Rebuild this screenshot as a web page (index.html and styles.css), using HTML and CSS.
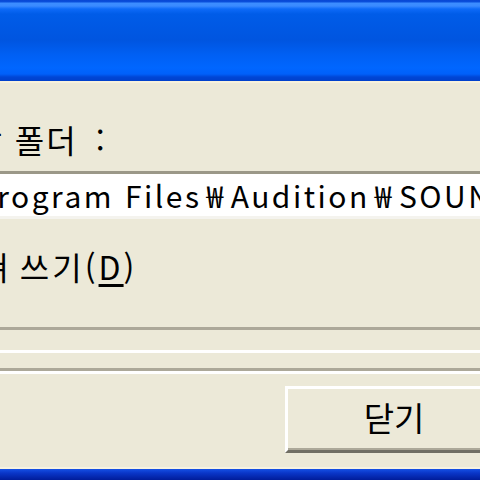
FILE: index.html
```html
<!DOCTYPE html>
<html lang='ko'>
<head>
  <meta charset='UTF-8'>
  <title>저장</title>
  <link rel="stylesheet" href="styles.css">
</head>
<body>

<div class='window'>
  <div class='titlebar'></div>

  <div class='client'>
    <div class='group'>
      <div class='field-label'>저장 폴더<span class='colon'>:</span></div>
      <div class='path-field'>C:<span class='sep'>₩</span>Program Files<span class='sep'>₩</span>Audition<span class='sep'>₩</span>SOUNDS</div>
      <label class='check-row'>
        <span class='check-box'></span>
        <span>겹쳐 쓰기(<u>D</u>)</span>
      </label>
    </div>

    <div class='status-bar'></div>

    <div class='actions'>
      <button class='xp-btn'>닫기</button>
    </div>
  </div>

  <div class='frame-bottom'></div>
</div>

</body>
</html>
```

FILE: styles.css
```css
* {
  margin: 0;
  padding: 0;
  box-sizing: border-box;
}

body {
  font-family: 'Noto Sans CJK KR', 'Noto Sans', sans-serif;
  background-color: #ECE9D8; /* XP dialog face */
  color: #000;
  overflow: hidden;
}

.window {
  width: 480px;
  height: 480px;
  display: flex;
  flex-direction: column;
  overflow: hidden;
}

/* Luna title bar */
.titlebar {
  height: 83px;
  flex-shrink: 0;
  background: linear-gradient(to bottom,
    #0846d4 0px, #0a4fdc 2px, #3d8eff 3px, #3a8aff 6px,
    #0d6af8 9px, #005ce8 14px, #0055e0 40px, #0060f4 55px,
    #0066ff 68px, #0060fa 74px, #0046d6 77px, #003cc6 83px);
  border-bottom: 2px solid #f7f1dc;
}

/* the dialog is wider than the crop, so it starts left of the view */
.client {
  flex: 1;
  width: 660px;
  margin-left: -140px;
  padding: 36px 20px 0 0;
  display: flex;
  flex-direction: column;
}

.group {
  padding-bottom: 41px;
  border-bottom: 3px solid #aca899;
}

.field-label {
  font-size: 32px;
  line-height: 40px;
  letter-spacing: 2px;
  padding-left: 81px;
}

.colon {
  margin-left: 18px;
}

.path-field {
  margin: 12px 0 0 46px;
  height: 48px;
  padding-left: 8px;
  background-color: #fff;
  border-top: 3px solid #9b9888;
  border-bottom: 3px solid #f4f3ee;
  font-size: 30px;
  line-height: 42px;
  letter-spacing: 2.5px;
  white-space: nowrap;
}

.sep {
  padding: 0 5px;
}

.check-row {
  display: flex;
  align-items: center;
  gap: 9px;
  margin: 27px 0 0 43px;
  font-size: 32px;
  line-height: 40px;
  letter-spacing: 3px;
  word-spacing: -4px;
}

.check-box {
  width: 35px;
  height: 35px;
  border: 3px solid #1c5180;
  background-color: #fff;
}

.check-row u {
  text-underline-offset: 4px;
}

.status-bar {
  margin-top: 20px;
  height: 21px;
  border-top: 3px solid #fff;
  border-bottom: 3px solid #aca899;
  box-shadow: 0 3px 0 #fff;
}

.actions {
  display: flex;
  justify-content: flex-end;
  margin-top: 15px;
}

.xp-btn {
  width: 215px;
  height: 67px;
  background-color: #ECE9D8;
  border: none;
  border-top: 3px solid #fff;
  border-left: 3px solid #fff;
  border-bottom: 3px solid #716f64;
  box-shadow: inset 0 -2px 0 #aca899;
  font-family: inherit;
  font-size: 33px;
  line-height: 40px;
  padding: 0 0 6px 0;
  color: #000;
}

.frame-bottom {
  height: 13px;
  flex-shrink: 0;
  background: linear-gradient(to bottom, #1550e6, #0a36c8 4px, #001c9a);
  border-top: 2px solid #f6f2e2;
}
```
